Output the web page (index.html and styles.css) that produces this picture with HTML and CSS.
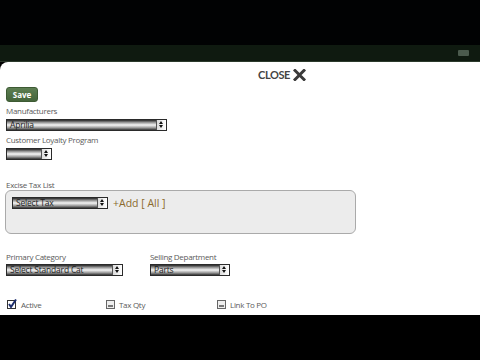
FILE: index.html
```html
<!DOCTYPE html>
<html>
<head>
<meta charset="utf-8">
<link rel="stylesheet" href="styles.css">
</head>
<body>
<div class="top"></div>
<div class="bar"><span class="bar-icon"></span></div>
<div class="modal">
  <div class="close-row"><span class="close-text">CLOSE</span>
    <svg class="close-x" width="13" height="12" viewBox="0 0 13 12"><path d="M2 1.5 L11 10.5 M11 1.5 L2 10.5" stroke="#3a3a3a" stroke-width="3" stroke-linecap="square"/></svg>
  </div>
  <button class="save">Save</button>
  <div class="label l-manu">Manufacturers</div>
  <div class="select w-manu"><span class="val">Aprilia</span><span class="arrows"></span></div>
  <div class="label l-loyal">Customer Loyalty Program</div>
  <div class="select w-loyal"><span class="val"></span><span class="arrows"></span></div>
  <div class="label l-excise">Excise Tax List</div>
  <div class="taxbox">
    <div class="select w-tax"><span class="val">Select Tax</span><span class="arrows"></span></div>
    <span class="add">+Add [ All ]</span>
  </div>
  <div class="two-col">
    <div class="col c1">
      <div class="label">Primary Category</div>
      <div class="select w-cat"><span class="val">Select Standard Cat</span><span class="arrows"></span></div>
    </div>
    <div class="col c2">
      <div class="label">Selling Department</div>
      <div class="select w-dept"><span class="val">Parts</span><span class="arrows"></span></div>
    </div>
  </div>
  <div class="checks">
    <div class="chk c-active">
      <svg width="10" height="10" viewBox="0 0 10 10"><rect x="0.5" y="1.5" width="8" height="8" fill="#fff" stroke="#333"/><path d="M2 5 L4 8 L9 0.5" stroke="#1c2e6e" stroke-width="2" fill="none"/></svg>
      <span>Active</span></div>
    <div class="chk c-tax">
      <svg width="9" height="9" viewBox="0 0 9 9"><rect x="0.5" y="0.5" width="8" height="8" fill="#eee" stroke="#666"/><rect x="2" y="5" width="5" height="2" fill="#777"/></svg>
      <span>Tax Qty</span></div>
    <div class="chk c-link">
      <svg width="9" height="9" viewBox="0 0 9 9"><rect x="0.5" y="0.5" width="8" height="8" fill="#eee" stroke="#666"/><rect x="2" y="5" width="5" height="2" fill="#777"/></svg>
      <span>Link To PO</span></div>
  </div>
</div>
<div class="bottom"></div>
</body>
</html>
```
FILE: styles.css
```css
html, body { margin: 0; padding: 0; background: #000; width: 480px; height: 360px; overflow: hidden; }
body { font-family: "Open Sans", "DejaVu Sans", sans-serif; }
.top { height: 45px; background: #010203; }
.bar { height: 17px; background: #0f1a10; border-bottom: 1px solid #2c3a2c; box-sizing: border-box; position: relative; }
.bar-icon { position: absolute; left: 458px; top: 5px; width: 11px; height: 6px; background: #4b5a4d; border-radius: 1px; }
.modal { height: 253px; background: #fff; border-top-left-radius: 8px; box-sizing: border-box; padding: 6px 0 0 6px; position: relative; }
.close-row { display: flex; align-items: center; justify-content: center; gap: 3px; height: 13px; margin-left: 78px; }
.close-text { font-family: "Lato", "Open Sans", sans-serif; font-weight: 700; font-size: 11px; color: #444; letter-spacing: -0.4px; }
.close-x { display: block; }
.save { display: block; margin-top: 6px; width: 32px; height: 15px; padding: 0; border: 1px solid #3d5a33; border-radius: 3px; background: linear-gradient(#5d7e52, #45653b); color: #fff; font-family: "Open Sans", sans-serif; font-weight: 700; font-size: 8px; }
.label { font-size: 8px; color: #5a5a5a; line-height: 12px; letter-spacing: -0.3px; }
.l-manu { margin-top: 3px; }
.l-loyal { margin-top: 3px; }
.l-excise { margin-top: 19px; }
.select { position: relative; height: 12px; box-sizing: border-box; border: 1px solid #2a2a2a; background: linear-gradient(#262626 0%, #999 25%, #f6f6f6 50%, #999 78%, #333 100%); display: flex; align-items: center; margin-top: 2px; }
.select .val { font-size: 8.5px; color: #222; padding-left: 3px; line-height: 10px; white-space: nowrap; overflow: hidden; flex: 1; letter-spacing: -0.2px; }
.select .arrows { width: 9px; height: 10px; border-left: 1px solid #555; background: linear-gradient(90deg, #ddd, #fff); position: relative; }
.select .arrows::before { content: ""; position: absolute; left: 2px; top: 1px; border-left: 2px solid transparent; border-right: 2px solid transparent; border-bottom: 3px solid #111; }
.select .arrows::after { content: ""; position: absolute; left: 2px; top: 5px; border-left: 2px solid transparent; border-right: 2px solid transparent; border-top: 3px solid #111; }
.w-manu { width: 161px; }
.w-loyal { width: 46px; }
.taxbox { width: 351px; height: 44px; margin-left: -1px; margin-top: -1px; box-sizing: border-box; border: 1px solid #aaa; border-radius: 6px; background: #ececec; padding: 6px 0 0 6px; display: flex; align-items: flex-start; gap: 5px; }
.taxbox .select { margin-top: 0; }
.w-tax { width: 96px; }
.add { font-size: 10.5px; color: #8a6a2c; line-height: 12px; }
.two-col { display: flex; margin-top: 17px; }
.col .select { margin-top: 1px; }
.c1 { width: 144px; }
.w-cat { width: 117px; }
.w-dept { width: 80px; }
.checks { display: flex; margin-top: 22px; height: 12px; align-items: center; }
.chk { display: flex; align-items: center; gap: 4px; font-size: 8px; color: #5a5a5a; letter-spacing: -0.3px; }
.chk svg { display: block; }
.c-active { width: 99px; margin-left: 1px; }
.c-tax { width: 111px; }
.bottom { height: 45px; background: #000; }
```
